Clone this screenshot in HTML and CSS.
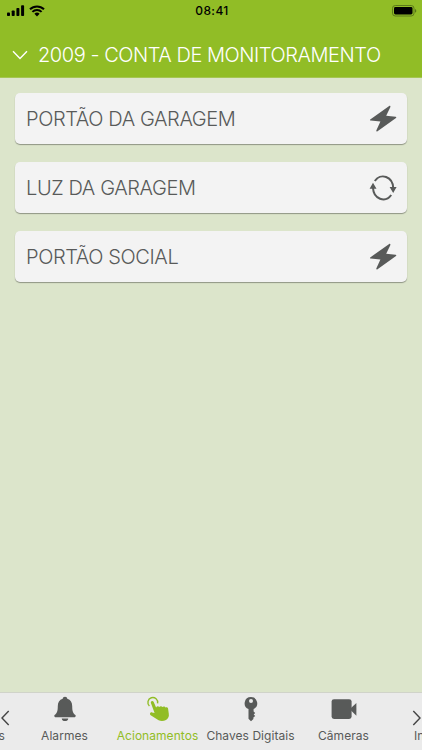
FILE: index.html
```
<!DOCTYPE html>
<html lang="pt-BR">
<head>
  <meta charset="UTF-8">
  <meta name="viewport" content="width=device-width, initial-scale=1.0">
  <title>Acionamentos</title>
  <link rel="stylesheet" href="styles.css">
</head>
<body>
  <header class="header">
    <div class="status-bar">
      <div class="status-left">
        <svg width="18" height="12" viewBox="0 0 18 12">
          <rect x="0" y="7.5" width="3" height="3.5" rx="0.8"/>
          <rect x="4.7" y="5.5" width="3" height="5.5" rx="0.8"/>
          <rect x="9.4" y="3" width="3" height="8" rx="0.8"/>
          <rect x="14.1" y="0.3" width="3" height="10.7" rx="0.8"/>
        </svg>
        <svg width="16" height="12" viewBox="0 0 16 12">
          <path d="M1 4.3a10 10 0 0 1 14 0M3.4 6.9a6.5 6.5 0 0 1 9.2 0" fill="none" stroke="#000" stroke-width="2"/>
          <path d="M5.4 8.8a3.7 3.7 0 0 1 5.2 0L8 11.4z"/>
        </svg>
      </div>
      <span class="clock">08:41</span>
      <svg class="battery" width="25" height="12" viewBox="0 0 25 12">
        <rect x="0.5" y="0.5" width="21.5" height="10.5" rx="2.8" fill="none" stroke="#5c7a1a"/>
        <rect x="2" y="2" width="18.5" height="7.5" rx="1.4"/>
        <path d="M23.2 4v3.8c1.4-.7 1.4-3.1 0-3.8z" fill="#4a6416"/>
      </svg>
    </div>
    <div class="account">
      <svg width="16" height="10" viewBox="0 0 16 10">
        <path d="M1 1.2l7 7.3 7-7.3" fill="none" stroke="#fff" stroke-width="1.4"/>
      </svg>
      <h1>2009 - CONTA DE MONITORAMENTO</h1>
    </div>
  </header>

  <main class="device-list">
    <div class="device">
      <span>PORTÃO DA GARAGEM</span>
      <svg width="28" height="28" viewBox="0 0 28 28">
        <path d="M20.2 1L1.2 14.4c-.4.5-.2 1.1.5 1.2L11.4 16.6 7.3 25.5c-.2.9.5 1.2 1.2.7L27 12.9c.6-.5.4-1.1-.4-1.2L17.2 10.8 21.4 2c.2-.9-.5-1.4-1.2-1z"/>
      </svg>
    </div>
    <div class="device">
      <span>LUZ DA GARAGEM</span>
      <svg width="28" height="28" viewBox="0 0 28 28">
        <path d="M5.8 7A10.3 12 0 0 1 24.2 14M22.2 21A10.3 12 0 0 1 4 14" fill="none" stroke="#585a59" stroke-width="2"/>
        <path d="M20.6 13h7L24.2 19zM.6 14.8h6.9L4 8.8z"/>
      </svg>
    </div>
    <div class="device">
      <span>PORTÃO SOCIAL</span>
      <svg width="28" height="28" viewBox="0 0 28 28">
        <path d="M20.2 1L1.2 14.4c-.4.5-.2 1.1.5 1.2L11.4 16.6 7.3 25.5c-.2.9.5 1.2 1.2.7L27 12.9c.6-.5.4-1.1-.4-1.2L17.2 10.8 21.4 2c.2-.9-.5-1.4-1.2-1z"/>
      </svg>
    </div>
  </main>

  <nav class="tab-bar">
    <div class="tabs">
      <div class="tab tab-first"><span>Eventos</span></div>
      <div class="tab">
        <svg width="26" height="26" viewBox="0 0 26 26">
          <path d="M13 .8c-1.4 0-2.2.8-2.3 2C7.3 3.8 5.8 6.5 5.8 10c0 5.8-1.1 7.4-3.2 9.1-.6.5-.3 2.1.6 2.1h19.6c.9 0 1.2-1.6.6-2.1-2.1-1.7-3.2-3.3-3.2-9.1 0-3.5-1.5-6.2-4.9-7.2-.1-1.2-.9-2-2.3-2zM9.7 22.4h6.6c-.3 1.8-1.5 2.7-3.3 2.7s-3-.9-3.3-2.7z"/>
        </svg>
        <span>Alarmes</span>
      </div>
      <div class="tab active">
        <svg width="26" height="26" viewBox="0 0 26 26">
          <path d="M4.4 10A4.9 4.9 0 1 1 12.6 7.4" fill="none" stroke="#91bd26" stroke-width="1.4"/>
          <path d="M5.9 7c-.6-2 2.1-2.8 2.8-.9l2.4 5.4c.7-1.4 2.5-1.5 3.1-.4.8-1.2 2.6-1.2 3.2-.1 1-1 2.7-.6 3.1.6 1.2-.7 2.4-.1 2.6 1.2l.7 5c.4 2.6-.4 4.9-2.8 6.2-2.3 1.3-5.2 1.4-7.4.3l-7.9-5c-1.5-1.1-.5-3.2 1.3-2.9l2.6.6z"/>
        </svg>
        <span>Acionamentos</span>
      </div>
      <div class="tab">
        <svg width="26" height="26" viewBox="0 0 26 26">
          <path fill-rule="evenodd" d="M13 1a6.3 6.3 0 0 0-2.5 12.1v9.7l2.5 2.4 2.4-2.2v-1.6l1.8-1.5-1.5-1.5 1.5-1.5-1.6-1.5v-2.4A6.3 6.3 0 0 0 13 1zm0 2.1a2 2 0 1 1 0 4 2 2 0 0 1 0-4z"/>
        </svg>
        <span>Chaves Digitais</span>
      </div>
      <div class="tab">
        <svg width="26" height="26" viewBox="0 0 26 26">
          <rect x="0.6" y="3.2" width="20" height="19.8" rx="2.4"/>
          <path d="M20 12l5.4-5v12.8L20 14.6z"/>
        </svg>
        <span>Câmeras</span>
      </div>
      <div class="tab tab-last"><span>Início</span></div>
    </div>
    <svg class="arrow arrow-left" width="10" height="16" viewBox="0 0 10 16">
      <path d="M8.7 1L2 8l6.7 7" fill="none" stroke="#444" stroke-width="1.4"/>
    </svg>
    <svg class="arrow arrow-right" width="10" height="16" viewBox="0 0 10 16">
      <path d="M1.3 1L8 8l-6.7 7" fill="none" stroke="#444" stroke-width="1.4"/>
    </svg>
  </nav>
</body>
</html>
```

FILE: styles.css
```
* {
  box-sizing: border-box;
}

body {
  margin: 0;
  height: 100vh;
  display: flex;
  flex-direction: column;
  overflow: hidden;
  font-family: Inter, "Liberation Sans", sans-serif;
  background: #dce5cb;
  color: #585a59;
}

svg {
  display: block;
  flex: none;
}

.header {
  height: 78px;
  background: #91bd26;
  border-bottom: 1px solid #a5c653;
}

.status-bar {
  display: grid;
  grid-template-columns: 1fr auto 1fr;
  align-items: center;
  height: 21px;
  padding: 0 5px 0 7px;
}

.status-left {
  display: flex;
  gap: 4px;
}

.clock {
  font-size: 12px;
  font-weight: 500;
  letter-spacing: 0.4px;
  color: #000;
}

.battery {
  justify-self: end;
}

.account {
  display: flex;
  align-items: center;
  gap: 10px;
  height: 56px;
  padding: 12px 0 0 12px;
}

.account h1 {
  margin: 0;
  font-size: 20px;
  font-weight: 300;
  letter-spacing: -0.45px;
  white-space: nowrap;
  color: #fff;
}

.device-list {
  flex: 1;
  display: flex;
  flex-direction: column;
  gap: 18px;
  padding: 15px 15px 0;
}

.device {
  display: flex;
  align-items: center;
  justify-content: space-between;
  height: 51px;
  padding: 1px 10px 0 11px;
  font-size: 20px;
  font-weight: 300;
  letter-spacing: -0.4px;
  background: #f3f3f3;
  border-radius: 5px;
  box-shadow: 0 1px 1px rgba(0, 0, 0, 0.35);
}

.device svg,
.tab svg {
  fill: #585a59;
}

.tab-bar {
  position: relative;
  height: 58px;
  background: #ebebeb;
  border-top: 1px solid #d0d3c9;
}

.tabs {
  display: flex;
  margin-left: -75px;
  overflow: hidden;
}

.tab {
  flex: 0 0 93px;
  display: flex;
  flex-direction: column;
  align-items: center;
  justify-content: flex-end;
  height: 52px;
  font-size: 12px;
  line-height: 18px;
  letter-spacing: 0.05px;
  white-space: nowrap;
}

.tab svg {
  margin-bottom: 5px;
}

.tab.active {
  color: #91bd26;
}

.tab.active svg {
  fill: #91bd26;
}

.tab-first {
  align-items: flex-end;
  padding-right: 13px;
}

.tab-last {
  align-items: flex-start;
  padding-left: 24px;
}

/* scroll hints over both ends of the tabs */
.arrow {
  position: absolute;
  top: 17px;
}

.arrow-left {
  left: 0;
}

.arrow-right {
  right: 0;
}
```
